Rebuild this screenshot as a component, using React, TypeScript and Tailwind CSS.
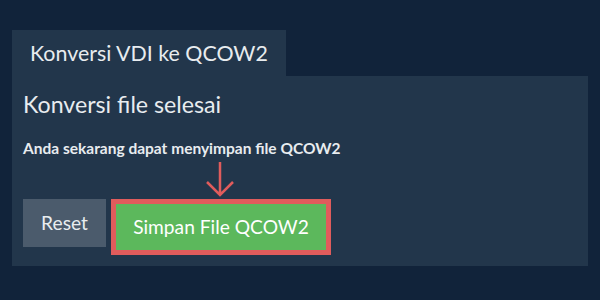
export default function App() {
  return (
    <div className="w-[600px] h-[300px] bg-[#11233a] pt-[30px] px-[12px] font-['Lato',sans-serif] text-[#e8ecef]">
      <div className="w-[274px] h-[46px] bg-[#22364b] flex items-center pl-[18px] text-[21.4px]">
        Konversi VDI ke QCOW2
      </div>
      <div className="h-[190px] bg-[#22364b] px-[11px] pt-[12px]">
        <h1 className="text-[23.2px] leading-[32px]">Konversi file selesai</h1>
        <p className="mt-[18px] text-[15.5px] font-bold leading-[20px]">Anda sekarang dapat menyimpan file QCOW2</p>
        <div className="mt-[41px] flex items-start gap-[5px]">
          <button className="w-[83px] h-[48px] bg-[#4b5b6c] text-[19.2px]">Reset</button>
          <div className="relative">
            <svg className="absolute left-[94px] top-[-38px]" width="30" height="36" viewBox="0 0 30 36">
              <path d="M15 1 L15 34 M2 21 L15 34 L28 21" stroke="#e05c5c" strokeWidth="2.5" fill="none" />
            </svg>
            <button className="w-[220px] h-[56px] bg-[#5cb85c] border-[5px] border-[#e05c5c] text-[19.2px] text-white">
              Simpan File QCOW2
            </button>
          </div>
        </div>
      </div>
    </div>
  )
}
